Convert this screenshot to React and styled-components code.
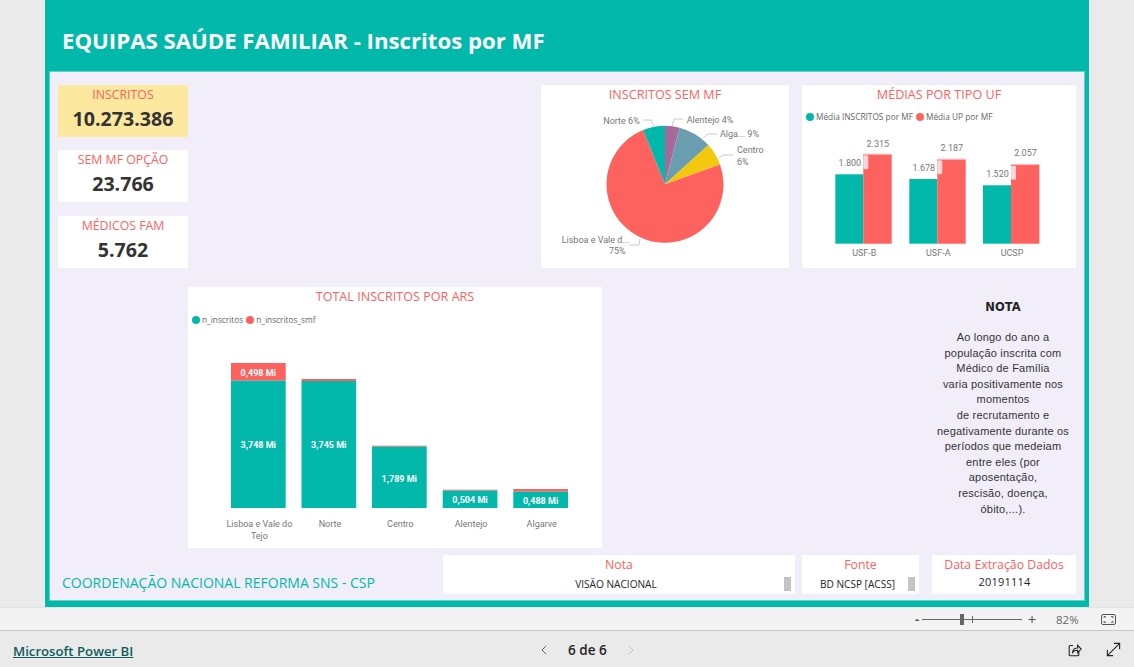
import React from 'react';
import styled, { createGlobalStyle } from 'styled-components';
import { ChevronLeft, ChevronRight, MoveDiagonal } from 'lucide-react';

const TEAL = '#01B8AA';
const RED = '#FD625E';
const SANS = '"Open Sans", "Noto Sans", sans-serif';
const DIN = 'Roboto, "Liberation Sans", sans-serif';

const GlobalStyle = createGlobalStyle`
  html, body { margin: 0; padding: 0; background: #eaeaea; }
  body { font-family: ${SANS}; overflow: hidden; }
`;

// --- Page shell ---
const Page = styled.div`
  width: 1134px;
  height: 667px;
  display: flex;
  flex-direction: column;
  background: #eaeaea;
  overflow: hidden;
`;

const Stage = styled.div`
  height: 607px;
  flex-shrink: 0;
  padding: 0 45px;
  box-sizing: border-box;
`;

const Report = styled.div`
  height: 100%;
  display: flex;
  flex-direction: column;
  padding: 0 4px 6px;
  box-sizing: border-box;
  background: ${TEAL};
`;

const Header = styled.header`
  height: 71px;
  flex-shrink: 0;
  display: flex;
  align-items: center;
  padding: 9px 0 0 13px;
  box-sizing: border-box;
`;

const HeaderTitle = styled.h1`
  margin: 0;
  font-size: 22.2px;
  font-weight: 700;
  color: #fff;
  white-space: nowrap;
`;

const Canvas = styled.main`
  flex: 1;
  min-height: 0;
  display: flex;
  flex-direction: column;
  padding: 13px 8px 0;
  box-sizing: border-box;
  border: 1px solid #5fd2c8;
  background: #f1eef9;
`;

const TopRow = styled.section`
  height: 183px;
  display: flex;
  gap: 13px;
`;

const MiddleRow = styled.section`
  height: 261px;
  margin-top: 19px;
  display: flex;
  padding-left: 130px;
`;

const BottomRow = styled.section`
  height: 39px;
  margin-top: 7px;
  display: flex;
  align-items: stretch;
`;

// --- KPI cards ---
const KpiColumn = styled.div`
  width: 130px;
  margin-right: auto;
  display: flex;
  flex-direction: column;
  gap: 13px;
`;

const KpiCard = styled.div`
  height: 52px;
  display: flex;
  flex-direction: column;
  align-items: center;
  background: ${({ $highlight }) => ($highlight ? '#fce99f' : '#fff')};

  &:last-child {
    margin-top: 1px;
  }
`;

const KpiLabel = styled.div`
  margin-top: 1px;
  font-size: 12.3px;
  line-height: 18px;
  color: ${RED};
`;

const KpiValue = styled.div`
  font-size: 19.6px;
  font-weight: 700;
  line-height: 30px;
  color: #333;
`;

// --- Chart panels ---
const Panel = styled.div`
  width: ${({ $width }) => $width}px;
  height: 100%;
  flex-shrink: 0;
  display: flex;
  flex-direction: column;
  background: #fff;
`;

const PanelTitle = styled.div`
  height: 20px;
  font-size: 12.6px;
  line-height: 20px;
  text-align: center;
  color: ${RED};
`;

const Legend = styled.div`
  height: ${({ $height }) => $height}px;
  padding: ${({ $top }) => $top}px 0 0 4px;
  display: flex;
  align-items: flex-start;
  gap: 2px;
  box-sizing: border-box;
  font-family: ${SANS};
  font-size: 8.3px;
  line-height: 12px;
  color: #666;
`;

const LegendDot = styled.span`
  width: 8px;
  height: 8px;
  margin-top: 2px;
  border-radius: 50%;
  background: ${({ $color }) => $color};
`;

const LegendText = styled.span`
  margin-right: 1px;
  white-space: nowrap;
`;

const ChartSvg = styled.svg`
  display: block;
  flex: 1;
  min-height: 0;
  width: 100%;
  font-family: ${DIN};
`;

const AxisText = styled.text`
  font-size: 9px;
  fill: #777;
  text-anchor: ${({ $anchor }) => $anchor || 'middle'};
`;

const BarValue = styled.text`
  font-size: 9px;
  font-weight: 700;
  fill: #fff;
  text-anchor: middle;
`;

const Leader = styled.polyline`
  fill: none;
  stroke: #c8c8c8;
  stroke-width: 1;
`;

// --- Note ---
const NoteColumn = styled.aside`
  width: 146px;
  margin-left: auto;
  padding-top: 12px;
  font-family: "Liberation Sans", Arial, sans-serif;
  text-align: center;
  color: #333;
`;

const NoteHeading = styled.div`
  margin-bottom: 15px;
  font-family: "DejaVu Sans", sans-serif;
  font-size: 11.5px;
  font-weight: 700;
  line-height: 16px;
  color: #252423;
`;

const NoteBody = styled.p`
  margin: 0;
  font-size: 11px;
  line-height: 15.6px;
  letter-spacing: 0.2px;
`;

// --- Bottom strip ---
const Brand = styled.div`
  width: 385px;
  padding: 18px 0 0 4px;
  box-sizing: border-box;
  font-size: 14px;
  line-height: 20px;
  color: ${TEAL};
  white-space: nowrap;
`;

const Slicer = styled.div`
  width: ${({ $width }) => $width}px;
  margin-right: ${({ $gap }) => $gap}px;
  flex-shrink: 0;
  display: flex;
  flex-direction: column;
  background: #fff;
`;

const SlicerTitle = styled.div`
  height: 20px;
  font-size: 12.3px;
  line-height: 20px;
  text-align: center;
  color: ${RED};
`;

const SlicerRow = styled.div`
  flex: 1;
  display: flex;
  align-items: center;
  padding: 0 4px ${({ $lift }) => $lift}px 5px;
`;

const SlicerValue = styled.div`
  flex: 1;
  font-size: 10.1px;
  line-height: 14px;
  text-align: center;
  color: #252423;
  white-space: nowrap;
`;

const SlicerDate = styled(SlicerValue)`
  font-size: 11px;
  letter-spacing: 0.2px;
`;

const SlicerScroll = styled.span`
  width: 7px;
  height: 14px;
  background: #c4c4c4;
`;

// --- Zoom bar ---
const ZoomBar = styled.div`
  height: 24px;
  flex-shrink: 0;
  display: flex;
  align-items: center;
  padding-left: 912px;
  box-sizing: border-box;
  background: #f3f3f3;
  border-top: 1px solid #e4e4e4;
  border-bottom: 1px solid #c8c8c8;
  color: #555;
`;

const ZoomSign = styled.span`
  width: 10px;
  font-family: ${SANS};
  font-size: ${({ $size }) => $size}px;
  font-weight: ${({ $bold }) => ($bold ? 700 : 400)};
  line-height: 20px;
  text-align: center;
`;

const ZoomTrack = styled.div`
  position: relative;
  width: 100px;
  height: 1px;
  margin-right: 5px;
  background: #666;
`;

const ZoomThumb = styled.span`
  position: absolute;
  left: 38px;
  top: -5px;
  width: 4px;
  height: 11px;
  background: #666;
`;

const ZoomTick = styled.span`
  position: absolute;
  left: 50px;
  top: -3px;
  width: 1px;
  height: 7px;
  background: #666;
`;

const ZoomPercent = styled.span`
  margin-left: 19px;
  width: 24px;
  font-size: 11.5px;
  color: #666;
`;

const FitIcon = styled.svg`
  margin-left: 21px;
  display: block;
`;

// --- Footer ---
const Footer = styled.footer`
  flex: 1;
  display: flex;
  align-items: center;
  padding: 1px 10px 0 13px;
  background: #eaeaea;
`;

const BrandLink = styled.a`
  width: 120px;
  margin-top: 2px;
  font-size: 13.2px;
  font-weight: 600;
  color: #0f5c5c;
  text-decoration: underline;
  white-space: nowrap;
`;

const Pager = styled.nav`
  margin-left: 403px;
  display: flex;
  align-items: center;
  gap: 16px;
`;

const PagerLabel = styled.span`
  font-size: 13.5px;
  font-weight: 600;
  color: #252423;
`;

const FooterActions = styled.div`
  margin-left: auto;
  display: flex;
  align-items: center;
  gap: 21px;
  color: #252423;
`;

// --- Data ---
const PIE = { cx: 665, cy: 184.3, r: 58.5 };

const pieSlices = [
  { from: 0, to: 4, color: '#A66999' },
  { from: 4, to: 13.3, color: '#6A9DB0' },
  { from: 13.3, to: 19.5, color: '#F2C80F' },
  { from: 19.5, to: 93.9, color: RED },
  { from: 93.9, to: 100, color: TEAL },
];

const pieLabels = [
  { x: 603.3, y: 124, text: 'Norte 6%' },
  { x: 686.7, y: 123, text: 'Alentejo 4%' },
  { x: 720, y: 137, text: 'Alga... 9%' },
  { x: 737, y: 153, text: 'Centro' },
  { x: 737, y: 165, text: '6%' },
  { x: 561.7, y: 243, text: 'Lisboa e Vale d...' },
  { x: 625.7, y: 254, text: '75%', anchor: 'end' },
];

const pieLeaders = [
  '643,120 651,120 654,126',
  '672,126 674,119 683,119',
  '703,138 708,134 717,134',
  '719,158 723,155 733,155',
  '640,239 639,245 629,245',
];

const mediaBars = [
  { name: 'USF-B', x: 835.3, a: 174.3, b: 154.3, aLabel: '1.800', bLabel: '2.315', aY: 166, bY: 147 },
  { name: 'USF-A', x: 909.3, a: 179, b: 159.3, aLabel: '1.678', bLabel: '2.187', aY: 171, bY: 151 },
  { name: 'UCSP', x: 983, a: 185.3, b: 164.7, aLabel: '1.520', bLabel: '2.057', aY: 177, bY: 156 },
];

const arsBars = [
  { x: 231, teal: 380.7, red: 363, value: '3,748 Mi', valueY: 448, extra: '0,498 Mi', axis: ['Lisboa e Vale do', 'Tejo'] },
  { x: 301.5, teal: 381, red: 379, value: '3,745 Mi', valueY: 448, axis: ['Norte'] },
  { x: 372, teal: 446.7, red: 445.7, value: '1,789 Mi', valueY: 482, axis: ['Centro'] },
  { x: 442.7, teal: 490.7, red: 489.7, value: '0,504 Mi', valueY: 503, axis: ['Alentejo'] },
  { x: 513.3, teal: 491.7, red: 489, value: '0,488 Mi', valueY: 504, axis: ['Algarve'] },
];

function slicePath({ from, to }) {
  const point = (pct) => {
    const a = (pct / 100) * Math.PI * 2;
    return `${PIE.cx + PIE.r * Math.sin(a)} ${PIE.cy - PIE.r * Math.cos(a)}`;
  };
  const large = to - from > 50 ? 1 : 0;
  return `M${PIE.cx} ${PIE.cy}L${point(from)}A${PIE.r} ${PIE.r} 0 ${large} 1 ${point(to)}Z`;
}

const Kpi = ({ label, value, highlight }) => (
  <KpiCard $highlight={highlight}>
    <KpiLabel>{label}</KpiLabel>
    <KpiValue>{value}</KpiValue>
  </KpiCard>
);

const PieChart = () => (
  <Panel $width={248}>
    <PanelTitle>INSCRITOS SEM MF</PanelTitle>
    <ChartSvg viewBox="541 105 248 163">
      {pieSlices.map((s) => (
        <path key={s.color} d={slicePath(s)} fill={s.color} />
      ))}
      {pieLeaders.map((points) => (
        <Leader key={points} points={points} />
      ))}
      {pieLabels.map((l) => (
        <AxisText key={l.text} x={l.x} y={l.y} $anchor={l.anchor || 'start'}>{l.text}</AxisText>
      ))}
    </ChartSvg>
  </Panel>
);

const MediaChart = () => (
  <Panel $width={274}>
    <PanelTitle>MÉDIAS POR TIPO UF</PanelTitle>
    <Legend $height={21} $top={6}>
      <LegendDot $color={TEAL} />
      <LegendText>Média INSCRITOS por MF</LegendText>
      <LegendDot $color={RED} />
      <LegendText>Média UP por MF</LegendText>
    </Legend>
    <ChartSvg viewBox="802 126 274 142">
      {mediaBars.map((b) => (
        <g key={b.name}>
          <rect x={b.x} y={b.a} width={28} height={243.7 - b.a} fill={TEAL} />
          <rect x={b.x + 28} y={b.b} width={28.4} height={243.7 - b.b} fill={RED} />
          <rect x={b.x + 28} y={b.b - 0.6} width={28.4} height={1} fill="#fbb" />
          <rect x={b.x + 28} y={b.b + 1} width={5} height={14} rx={1.5} fill="#fdd6d5" />
          <AxisText x={b.x + 14.5} y={b.aY}>{b.aLabel}</AxisText>
          <AxisText x={b.x + 42.5} y={b.bY}>{b.bLabel}</AxisText>
          <AxisText x={b.x + 29} y={255.5}>{b.name}</AxisText>
        </g>
      ))}
    </ChartSvg>
  </Panel>
);

const ArsChart = () => (
  <Panel $width={414}>
    <PanelTitle>TOTAL INSCRITOS POR ARS</PanelTitle>
    <Legend $height={25} $top={7}>
      <LegendDot $color={TEAL} />
      <LegendText>n_inscritos</LegendText>
      <LegendDot $color={RED} />
      <LegendText>n_inscritos_smf</LegendText>
    </Legend>
    <ChartSvg viewBox="188 332 414 216">
      {arsBars.map((b) => (
        <g key={b.x}>
          <rect x={b.x} y={b.red} width={54.7} height={b.teal - b.red} fill={RED} />
          <rect x={b.x} y={b.teal} width={54.7} height={508 - b.teal} fill={TEAL} />
          <BarValue x={b.x + 27.3} y={b.valueY}>{b.value}</BarValue>
          {b.extra && <BarValue x={b.x + 27.3} y={376}>{b.extra}</BarValue>}
          {b.axis.map((line, i) => (
            <AxisText key={line} x={b.x + 28.4} y={527 + i * 12}>{line}</AxisText>
          ))}
        </g>
      ))}
    </ChartSvg>
  </Panel>
);

export default function App() {
  return (
    <Page>
      <GlobalStyle />
      <Stage>
        <Report>
          <Header>
            <HeaderTitle>EQUIPAS SAÚDE FAMILIAR - Inscritos por MF</HeaderTitle>
          </Header>
          <Canvas>
            <TopRow>
              <KpiColumn>
                <Kpi label="INSCRITOS" value="10.273.386" highlight />
                <Kpi label="SEM MF OPÇÃO" value="23.766" />
                <Kpi label="MÉDICOS FAM" value="5.762" />
              </KpiColumn>
              <PieChart />
              <MediaChart />
            </TopRow>

            <MiddleRow>
              <ArsChart />
              <NoteColumn>
                <NoteHeading>NOTA</NoteHeading>
                <NoteBody>
                  Ao longo do ano a<br />
                  população inscrita com<br />
                  Médico de Família<br />
                  varia positivamente nos<br />
                  momentos<br />
                  de recrutamento e<br />
                  negativamente durante os<br />
                  períodos que medeiam<br />
                  entre eles (por<br />
                  aposentação,<br />
                  rescisão, doença,<br />
                  óbito,...).
                </NoteBody>
              </NoteColumn>
            </MiddleRow>

            <BottomRow>
              <Brand>COORDENAÇÃO NACIONAL REFORMA SNS - CSP</Brand>
              <Slicer $width={352} $gap={7}>
                <SlicerTitle>Nota</SlicerTitle>
                <SlicerRow $lift={2}>
                  <SlicerValue>VISÃO NACIONAL</SlicerValue>
                  <SlicerScroll />
                </SlicerRow>
              </Slicer>
              <Slicer $width={117} $gap={13}>
                <SlicerTitle>Fonte</SlicerTitle>
                <SlicerRow $lift={2}>
                  <SlicerValue>BD NCSP [ACSS]</SlicerValue>
                  <SlicerScroll />
                </SlicerRow>
              </Slicer>
              <Slicer $width={144} $gap={0}>
                <SlicerTitle>Data Extração Dados</SlicerTitle>
                <SlicerRow $lift={5}>
                  <SlicerDate>20191114</SlicerDate>
                </SlicerRow>
              </Slicer>
            </BottomRow>
          </Canvas>
        </Report>
      </Stage>

      <ZoomBar>
        <ZoomSign $size={13} $bold>-</ZoomSign>
        <ZoomTrack>
          <ZoomThumb />
          <ZoomTick />
        </ZoomTrack>
        <ZoomSign $size={15}>+</ZoomSign>
        <ZoomPercent>82%</ZoomPercent>
        <FitIcon width="15" height="11" viewBox="0 0 15 11" fill="none" stroke="#555" strokeWidth="1">
          <rect x="0.5" y="0.5" width="14" height="10" rx="1.5" />
          <path d="M3 4V2.7H5M10 2.7h2V4M3 7v1.3H5M10 8.3h2V7" />
        </FitIcon>
      </ZoomBar>

      <Footer>
        <BrandLink>Microsoft Power BI</BrandLink>
        <Pager>
          <ChevronLeft size={16} strokeWidth={1.25} color="#444" />
          <PagerLabel>6 de 6</PagerLabel>
          <ChevronRight size={16} strokeWidth={1.25} color="#bbb" />
        </Pager>
        <FooterActions>
          <svg width="14" height="14" viewBox="0 0 14 14" fill="none" stroke="#252423" strokeWidth="1.1">
            <path d="M5 2.5H2.2a1 1 0 0 0-1 1v8.3a1 1 0 0 0 1 1h7.6a1 1 0 0 0 1-1V8.5" />
            <path d="M4.6 9.4c.3-2.7 2.2-4.3 5-4.4V2.4l3.6 3.7-3.6 3.6V7.2c-2.2 0-3.8.6-5 2.2Z" />
          </svg>
          <MoveDiagonal size={21} strokeWidth={1.3} />
        </FooterActions>
      </Footer>
    </Page>
  );
}
